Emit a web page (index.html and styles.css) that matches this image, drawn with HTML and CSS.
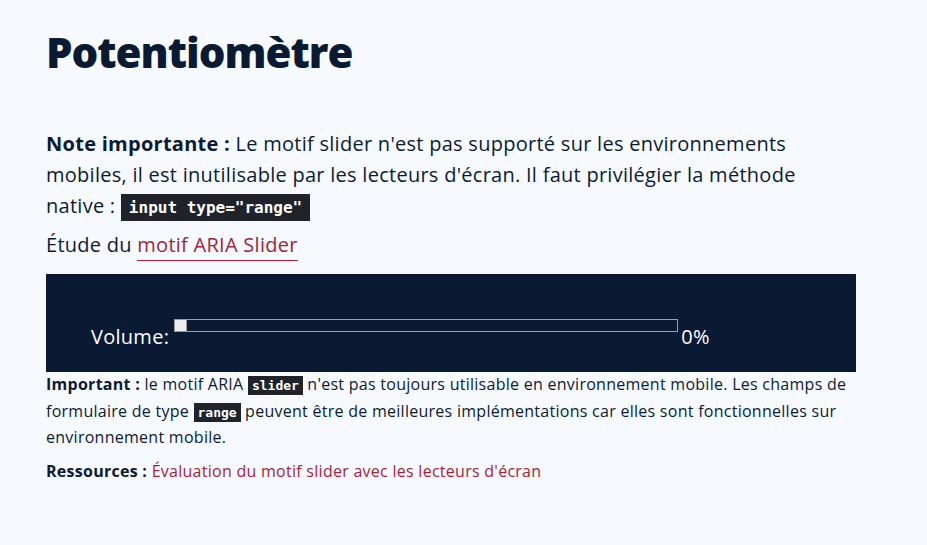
FILE: index.html
```html
<!DOCTYPE html>
<html lang="fr">
<head>
<meta charset="utf-8">
<title>Potentiomètre</title>
<link rel="stylesheet" href="styles.css">
</head>
<body>
<main class="page">
  <h1 class="title">Potentiomètre</h1>
  <p class="note"><strong>Note importante :</strong> Le motif slider n'est pas supporté sur les environnements mobiles, il est inutilisable par les lecteurs d'écran. Il faut privilégier la méthode native : <code class="code-lg">input type="range"</code></p>
  <p class="study">Étude du <a class="link" href="#">motif ARIA Slider</a></p>
  <div class="demo">
    <div class="slider-row">
      <span class="label">Volume:</span>
      <div class="track" role="slider" aria-valuenow="0" aria-valuemin="0" aria-valuemax="100" aria-label="Volume">
        <span class="thumb"></span>
      </div>
      <span class="value">0%</span>
    </div>
  </div>
  <p class="small"><strong>Important :</strong> le motif ARIA <code class="code-sm">slider</code> n'est pas toujours utilisable en environnement mobile. Les champs de formulaire de type <code class="code-sm">range</code> peuvent être de meilleures implémentations car elles sont fonctionnelles sur environnement mobile.</p>
  <p class="small res"><strong>Ressources :</strong> <a class="link" href="#">Évaluation du motif slider avec les lecteurs d'écran</a></p>
</main>
</body>
</html>
```

FILE: styles.css
```css
html, body {
  margin: 0;
  padding: 0;
  background: #f6faff;
}
body {
  font-family: "Open Sans", "Liberation Sans", sans-serif;
  color: #0b1a33;
}
.page {
  width: 810px;
  padding: 26px 0 0 46px;
}
.title {
  margin: 0;
  font-size: 42px;
  font-weight: 800;
  line-height: 52px;
  letter-spacing: -1px;
}
.note {
  margin: 50px 0 0;
  font-size: 20px;
  line-height: 31px;
  letter-spacing: 0.27px;
}
.note strong, .small strong {
  font-weight: 700;
}
code {
  font-family: "DejaVu Sans Mono", "Liberation Mono", monospace;
  font-weight: 700;
  background: #202329;
  color: #ffffff;
  white-space: nowrap;
  letter-spacing: 0;
}
.code-lg {
  font-size: 16px;
  padding: 4px 8px;
}
.code-sm {
  font-size: 13px;
  padding: 2px 4px;
}
.study {
  margin: 6px 0 0;
  font-size: 20px;
  line-height: 31px;
  letter-spacing: 0.27px;
}
.link {
  color: #a3233a;
  text-decoration: none;
  border-bottom: 1px solid #a3233a;
  padding-bottom: 2px;
}
.demo {
  margin-top: 14px;
  background: #0b1a33;
  height: 98px;
  box-sizing: border-box;
  padding: 45px 0 0 45px;
  color: #ffffff;
}
.slider-row {
  display: flex;
  align-items: flex-start;
}
.label, .value {
  font-size: 20px;
  line-height: 24px;
  margin-top: 6px;
  letter-spacing: 0.27px;
}
.track {
  position: relative;
  width: 502px;
  height: 11px;
  border: 1px solid #a0a0a0;
  margin-left: 5px;
}
.thumb {
  position: absolute;
  left: -1px;
  top: -1px;
  width: 13px;
  height: 13px;
  background: #ececec;
  border: 1px solid #9a9a9a;
  box-sizing: border-box;
}
.value {
  margin-left: 3px;
}
.small {
  margin: 0;
  font-size: 16px;
  line-height: 25.5px;
  letter-spacing: 0.27px;
}
.res {
  margin-top: 8px;
}
.res .link {
  border-bottom-color: #e7c9cf;
}
```
